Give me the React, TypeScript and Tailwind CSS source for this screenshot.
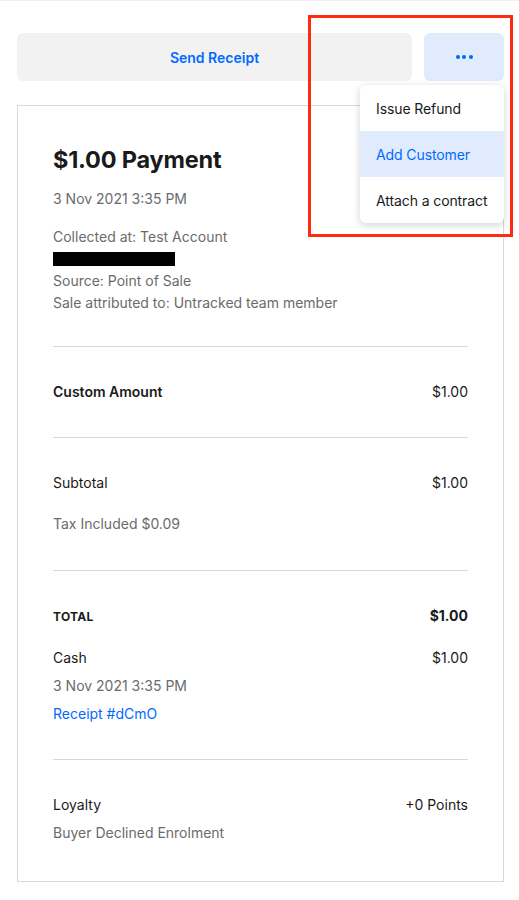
import React from "react";

const Row = ({ left, right, className = "" }: { left: React.ReactNode; right?: React.ReactNode; className?: string }) => (
  <div className={`flex items-center justify-between ${className}`}>
    <div>{left}</div>
    {right !== undefined && <div>{right}</div>}
  </div>
);

export default function App() {
  return (
    <div
      className="relative min-h-[900px] w-[519px] bg-white border-t border-[#f0f0f0] pl-[17px] pr-[15px] pt-[32px] text-[14px] text-[#1a1a1a]"
      style={{ fontFamily: "Inter, 'Noto Sans', sans-serif" }}
    >
      <div className="flex gap-[12px]">
        <button className="h-[48px] flex-1 rounded-[6px] bg-[#f2f2f2] text-[14px] font-semibold text-[#006aff]">
          Send Receipt
        </button>
        <button className="flex h-[48px] w-[80px] items-center justify-center gap-[2.5px] rounded-[6px] bg-[#e0ecfd]">
          <span className="h-[4px] w-[4px] rounded-full bg-[#006aff]" />
          <span className="h-[4px] w-[4px] rounded-full bg-[#006aff]" />
          <span className="h-[4px] w-[4px] rounded-full bg-[#006aff]" />
        </button>
      </div>

      <div className="mt-[24px] border border-[#d9d9d9] px-[35px] pb-[34px]">
        <div className="pt-[38px] pb-[32px]">
          <h1 className="text-[23.5px] font-bold leading-[32px] tracking-[-0.2px]">$1.00 Payment</h1>
          <div className="mt-[13px] leading-[20px] text-[#6b6b6b]">3 Nov 2021 3:35 PM</div>
          <div className="mt-[17px] leading-[22px] text-[#6b6b6b]">
            <div>Collected at: Test Account</div>
            <div className="flex h-[22px] items-start pt-[4px]">
              <span className="h-[14px] w-[122px] bg-black" />
            </div>
            <div>Source: Point of Sale</div>
            <div>Sale attributed to: Untracked team member</div>
          </div>
        </div>

        <div className="border-t border-[#d9d9d9] py-[35px] leading-[20px]">
          <Row left={<span className="font-semibold">Custom Amount</span>} right="$1.00" />
        </div>

        <div className="border-t border-[#d9d9d9] pt-[35px] pb-[36px] leading-[20px]">
          <Row left="Subtotal" right="$1.00" />
          <div className="mt-[21px] text-[#6b6b6b]">Tax Included $0.09</div>
        </div>

        <div className="border-t border-[#d9d9d9] pt-[34px] pb-[31px]">
          <Row
            className="h-[20px]"
            left={<span className="text-[12px] font-bold uppercase tracking-[0.3px]">Total</span>}
            right={<span className="font-bold">$1.00</span>}
          />
          <div className="mt-[19px] leading-[28px]">
            <Row left="Cash" right="$1.00" />
            <div className="text-[#6b6b6b]">3 Nov 2021 3:35 PM</div>
            <div className="text-[#006aff]">Receipt #dCmO</div>
          </div>
        </div>

        <div className="border-t border-[#d9d9d9] pt-[31px] leading-[28px]">
          <Row left="Loyalty" right="+0 Points" />
          <div className="text-[#6b6b6b]">Buyer Declined Enrolment</div>
        </div>
      </div>

      <div className="absolute left-[360px] top-[84px] w-[144px] overflow-hidden rounded-[6px] bg-white shadow-[0_2px_8px_rgba(0,0,0,0.18)]">
        <div className="flex h-[46px] items-center whitespace-nowrap px-[16px] tracking-[-0.1px]">Issue Refund</div>
        <div className="flex h-[46px] items-center whitespace-nowrap bg-[#e0ecfd] px-[16px] tracking-[-0.1px] text-[#006aff]">Add Customer</div>
        <div className="flex h-[46px] items-center whitespace-nowrap px-[16px] tracking-[-0.1px]">Attach a contract</div>
      </div>

      <div className="pointer-events-none absolute left-[308px] top-[14px] h-[222px] w-[205px] border-[3px] border-[#ff2a12]" />
    </div>
  );
}
